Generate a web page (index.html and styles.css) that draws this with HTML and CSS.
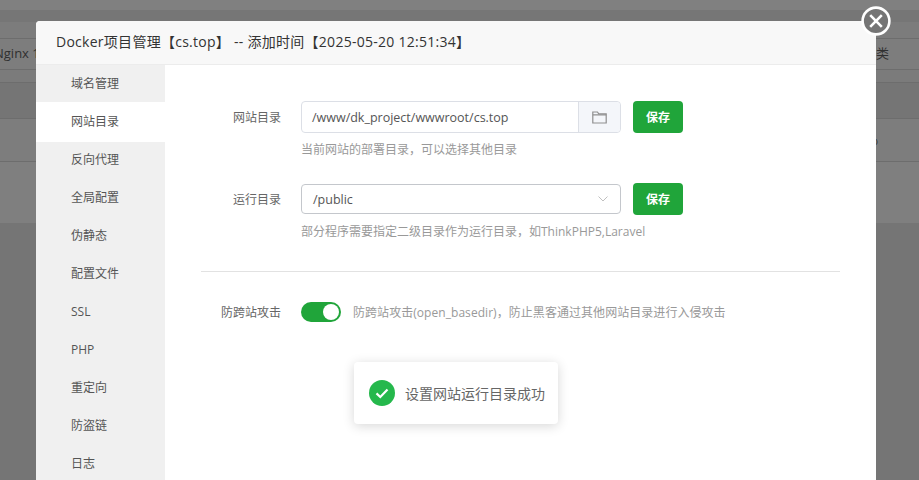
FILE: index.html
```html
<!DOCTYPE html>
<html lang="zh-CN">
<head>
<meta charset="utf-8">
<title>Docker项目管理</title>
<link rel="stylesheet" href="styles.css">
</head>
<body>
<div class="backdrop">
  <div class="bg-top"></div>
  <div class="bg-band"></div>
  <div class="bg-light"></div>
  <div class="bg-head"><span class="bg-head-l">Nginx 1</span><span class="bg-head-r">类</span></div>
  <div class="bg-gap"></div>
  <div class="bg-row"></div>
  <div class="bg-row-2"><span class="bg-dot">o</span></div>
  <div class="bg-row-3"></div>
  <div class="bg-foot"></div>
</div>
<section class="modal">
  <header class="modal-title">Docker项目管理【cs.top】 -- 添加时间【2025-05-20 12:51:34】</header>
  <div class="modal-body">
    <nav class="side">
      <a class="side-item">域名管理</a>
      <a class="side-item active">网站目录</a>
      <a class="side-item">反向代理</a>
      <a class="side-item">全局配置</a>
      <a class="side-item">伪静态</a>
      <a class="side-item">配置文件</a>
      <a class="side-item">SSL</a>
      <a class="side-item">PHP</a>
      <a class="side-item">重定向</a>
      <a class="side-item">防盗链</a>
      <a class="side-item">日志</a>
    </nav>
    <main class="content">
      <div class="form-row">
        <label class="form-label">网站目录</label>
        <div class="input-group">
          <span class="input-text">/www/dk_project/wwwroot/cs.top</span>
          <span class="input-addon">
            <svg width="15" height="13" viewBox="0 0 15 13" fill="none" stroke="#8f8f8f" stroke-width="1.2"><path d="M.8 12V1h4.6l1.4 1.900h7.400V12z"/><path d="M.8 3.800h13.400"/></svg>
          </span>
        </div>
        <button class="btn-save">保存</button>
      </div>
      <p class="hint hint-first">当前网站的部署目录，可以选择其他目录</p>
      <div class="form-row form-row-2">
        <label class="form-label">运行目录</label>
        <div class="select">
          <span class="select-text">/public</span>
          <svg width="10" height="6" viewBox="0 0 10 6" fill="none" stroke="#c0c0c0" stroke-width="1"><path d="M.5.5L5 5 9.500.5"/></svg>
        </div>
        <button class="btn-save">保存</button>
      </div>
      <p class="hint hint-second">部分程序需要指定二级目录作为运行目录，如ThinkPHP5,Laravel</p>
      <hr class="divider">
      <div class="switch-row">
        <label class="form-label">防跨站攻击</label>
        <span class="switch"><span class="knob"></span></span>
        <span class="switch-hint">防跨站攻击(open_basedir)，防止黑客通过其他网站目录进行入侵攻击</span>
      </div>
    </main>
  </div>
</section>
<button class="close" aria-label="关闭">
  <svg width="30" height="30" viewBox="0 0 30 30" fill="none" stroke="#fff" stroke-width="2.6"><circle cx="15" cy="15" r="13.4" fill="#757575"/><path d="M9.200 9.200l11.600 11.600M20.800 9.200L9.200 20.800"/></svg>
</button>
<div class="toast">
  <svg width="26" height="26" viewBox="0 0 26 26"><circle cx="13" cy="13" r="13" fill="#25b84c"/><path d="M7.500 13.400l3.800 3.600 7.200-7.400" fill="none" stroke="#fff" stroke-width="2.200"/></svg>
  <span>设置网站运行目录成功</span>
</div>
</body>
</html>
```
FILE: styles.css
```css
* { box-sizing: border-box; }
html, body { margin: 0; height: 100%; }
body {
  width: 919px;
  height: 480px;
  overflow: hidden;
  position: relative;
  background: #7d7d7d;
  font-family: "Open Sans", "Noto Sans CJK SC", sans-serif;
  font-size: 12px;
  color: #555;
}
.backdrop { height: 480px; display: flex; flex-direction: column; overflow: hidden; }
.bg-top { height: 10px; flex: none; background: #808080; }
.bg-band { height: 12px; flex: none; background: #767676; }
.bg-light { height: 16px; flex: none; background: #7c7c7c; }
.bg-head {
  height: 32px;
  flex: none;
  border-top: 1px solid #6d6d6d;
  border-bottom: 1px solid #6d6d6d;
  display: flex;
  justify-content: space-between;
  align-items: center;
  padding-bottom: 3px;
  color: #2f2f2f;
  background: #7d7d7d;
  font-size: 13px;
}
.bg-head-l { margin-left: -6px; white-space: nowrap; }
.bg-head-r { margin-right: 30px; }
.bg-gap { height: 13px; flex: none; background: #7b7b7b; border-bottom: 1px solid #6d6d6d; }
.bg-row { height: 36px; flex: none; background: #757575; border-bottom: 1px solid #6d6d6d; }
.bg-row-2 { height: 43px; flex: none; background: #7d7d7d; border-bottom: 1px solid #6d6d6d; text-align: right; padding-right: 41px; color: #333; font-size: 10px; line-height: 44px; }
.bg-row-3 { height: 61px; flex: none; background: #7f7f7f; }
.bg-foot { flex: 1; background: #757575; }
.modal {
  position: absolute;
  left: 36px;
  top: 21px;
  width: 840px;
  height: 470px;
  background: #fff;
  border-radius: 4px 4px 0 0;
  display: flex;
  flex-direction: column;
  overflow: hidden;
}
.modal-title {
  height: 44px;
  flex: none;
  background: #f8f8f8;
  border-bottom: 1px solid #ececec;
  padding-left: 20px;
  font-size: 14px;
  letter-spacing: .27px;
  line-height: 42px;
  color: #333;
  white-space: nowrap;
}
.modal-body { flex: 1; display: flex; min-height: 0; }
.side { width: 129px; flex: none; background: #f0f0f0; display: flex; flex-direction: column; }
.side-item { height: 38px; flex: none; padding-left: 35px; line-height: 38px; color: #555; }
.side-item:first-child { height: 37px; line-height: 37px; }
.side-item.active { background: #fff; height: 40px; line-height: 39px; }
.side-item.active + .side-item { height: 37px; line-height: 36px; }
.content { flex: 1; padding: 36px 36px 0; min-width: 0; }
.form-row { display: flex; align-items: center; height: 32px; }
.form-label { flex: none; text-align: right; color: #666; padding-right: 20px; width: 100px; }
.input-group {
  width: 320px;
  height: 32px;
  display: flex;
  border: 1px solid #dcdfe6;
  border-radius: 4px;
  font-size: 12.5px;
  color: #555;
}
.input-text { flex: 1; padding-left: 10px; line-height: 31px; white-space: nowrap; }
.input-addon {
  width: 42px;
  background: #f4f6fa;
  border-left: 1px solid #dcdfe6;
  border-radius: 0 4px 4px 0;
  display: flex;
  align-items: center;
  justify-content: center;
}
.btn-save {
  width: 50px;
  height: 32px;
  margin-left: 12px;
  border: 0;
  border-radius: 4px;
  background: #20a53a;
  color: #fff;
  font-family: inherit;
  font-size: 12px;
  font-weight: bold;
  padding: 0;
}
.select {
  width: 320px;
  height: 30px;
  border: 1px solid #c4c7cc;
  border-radius: 4px;
  display: flex;
  align-items: center;
  justify-content: space-between;
  padding: 0 12px 0 11px;
  font-size: 12.5px;
  color: #555;
}
.hint { margin: 0; padding-left: 100px; color: #999; line-height: 16px; }
.hint-first { margin-top: 9px; }
.form-row-2 { margin-top: 25px; }
.hint-second { margin-top: 9px; }
.divider { border: 0; border-top: 1px solid #e2e2e2; margin: 31px 0 0; }
.switch-row { display: flex; align-items: center; margin-top: 30px; height: 20px; }
.switch {
  width: 40px;
  height: 20px;
  flex: none;
  border-radius: 10px;
  background: #20a53a;
  display: flex;
  justify-content: flex-end;
  align-items: center;
  padding-right: 2px;
}
.knob { width: 16px; height: 16px; border-radius: 50%; background: #fff; }
.switch-hint { margin-left: 12px; color: #999; letter-spacing: .05px; white-space: nowrap; }
.close {
  position: absolute;
  left: 861px;
  top: 6px;
  width: 30px;
  height: 30px;
  padding: 0;
  border: 0;
  background: none;
  display: block;
}
.close svg { display: block; }
.toast {
  position: absolute;
  left: 354px;
  top: 362px;
  width: 204px;
  height: 62px;
  background: #fff;
  border-radius: 4px;
  box-shadow: 0 2px 12px rgba(0,0,0,.16);
  display: flex;
  align-items: center;
  gap: 10px;
  padding-left: 15px;
  font-size: 14px;
  color: #666;
}
```
